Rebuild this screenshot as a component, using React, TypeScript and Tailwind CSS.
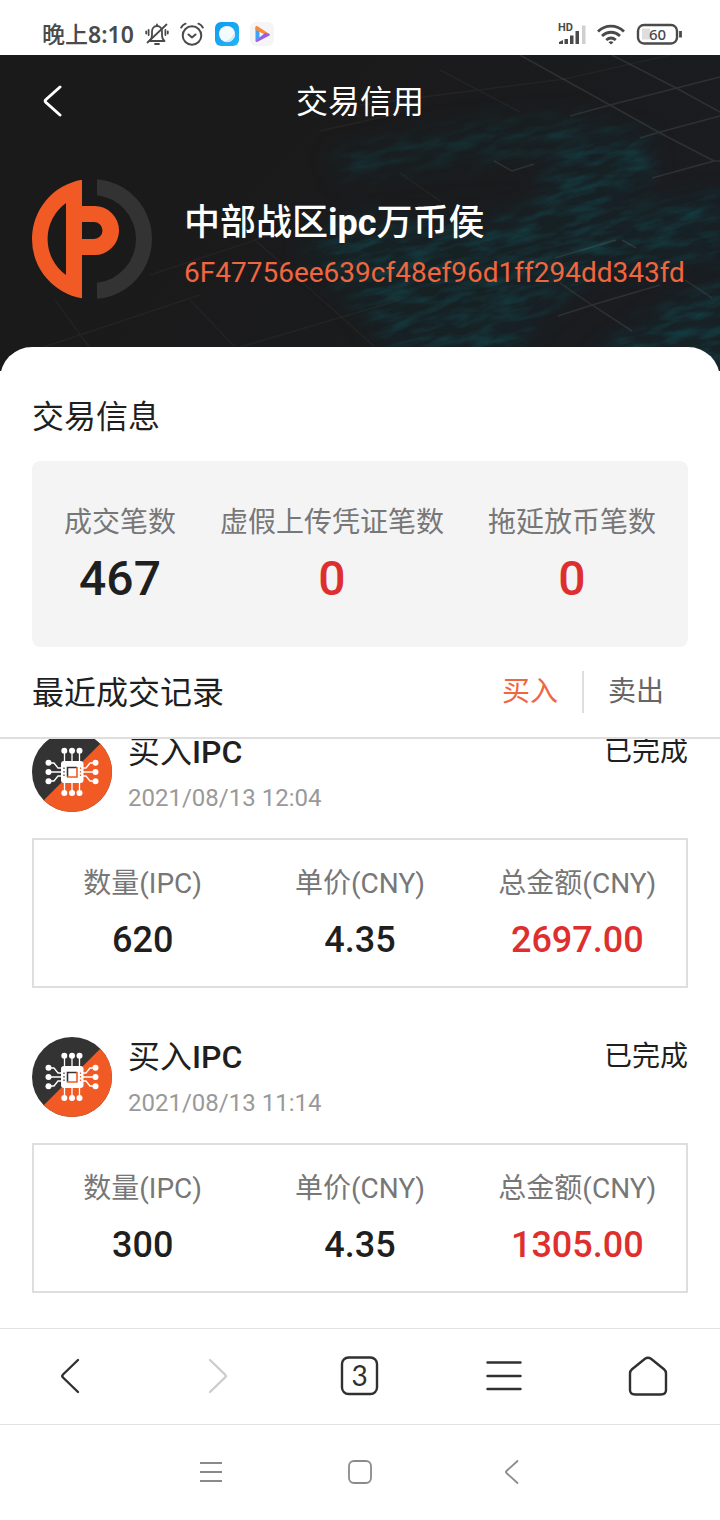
import { useState } from "react";
import clsx from "clsx";

const stats = [
  { label: "成交笔数", value: "467", danger: false },
  { label: "虚假上传凭证笔数", value: "0", danger: true },
  { label: "拖延放币笔数", value: "0", danger: true },
];

const records = [
  {
    id: 1,
    title: "买入IPC",
    time: "2021/08/13 12:04",
    status: "已完成",
    amount: "620",
    price: "4.35",
    total: "2697.00",
  },
  {
    id: 2,
    title: "买入IPC",
    time: "2021/08/13 11:14",
    status: "已完成",
    amount: "300",
    price: "4.35",
    total: "1305.00",
  },
];

function StatusBar() {
  return (
    <div className="flex h-[55px] items-center justify-between pt-3 pr-9 pl-[42px] text-[#4a4a4a]">
      <div className="flex items-center gap-[11px]">
        <span className="font-['Noto_Sans','Noto_Sans_CJK_SC',sans-serif] text-[23px] leading-8 font-medium">
          晚上<span className="font-semibold">8:10</span>
        </span>
        <svg className="h-6 w-6" viewBox="0 0 24 24" fill="none" stroke="currentColor" strokeWidth="1.8" strokeLinecap="round" strokeLinejoin="round">
          <path d="M5 19h14.500c-2-1.600-2.500-3-2.500-6V9.500C17 6.500 15 4 12 4S7 6.500 7 9.500V13c0 3-.5 4.400-2.500 6" />
          <path d="M10 22h4M12 2.500V4M21.500 2.500 2.500 20.500" />
          <path d="M3.600 8v5M1.200 9.500v2M20.400 8v5M22.800 9.500v2" />
        </svg>
        <svg className="h-6 w-6" viewBox="0 0 24 24" fill="none" stroke="currentColor" strokeWidth="2" strokeLinecap="round" strokeLinejoin="round">
          <circle cx="12" cy="13.500" r="9.300" />
          <path d="m8.500 12.500 3.500 3 3.500-3M1.200 5.500c1-1.800 2.400-3 4.300-3.800M22.800 5.500c-1-1.800-2.400-3-4.300-3.800" />
        </svg>
        <svg className="h-6 w-6" viewBox="0 0 24 24">
          <defs>
            <linearGradient id="appBlue" x1="0" y1="0" x2="1" y2="1">
              <stop offset="0" stopColor="#0f9bf0" />
              <stop offset="1" stopColor="#25b4f5" />
            </linearGradient>
          </defs>
          <rect width="24" height="24" rx="6" fill="url(#appBlue)" />
          <circle cx="12" cy="12" r="8" fill="#f4fbff" />
          <path d="M19.500 9a8 8 0 0 1-11 10.200C14 19 18.500 15 19.500 9Z" fill="#cfe9f8" />
        </svg>
        <svg className="h-6 w-6" viewBox="0 0 24 24">
          <rect width="24" height="24" rx="6" fill="#f5f5f5" />
          <path d="M5.500 5v14l4-3V9.500Z" fill="#3fa3f5" />
          <path d="M5.500 5c0-1 1-1.300 2-.8L19.500 12l-4.500.5L5.500 8Z" fill="#f58a3c" />
          <path d="M19.500 12c.6.6.3 1.300-.5 1.800L7.500 19.800c-1 .5-2 0-2-1L15 11Z" fill="#9a5be8" />
        </svg>
      </div>

      <div className="flex items-center gap-[11px]">
        <svg className="h-6 w-7" viewBox="0 0 28 24" fill="currentColor">
          <text x="0" y="9" fontSize="11" fontWeight="700" fontFamily="Roboto, sans-serif">
            HD
          </text>
          <path d="M1 22v-2l4-2v4ZM6.500 22v-5h3.500v5ZM12 22v-8.500h3.500V22ZM17.500 22V9H21v13Z" />
          <path d="M24 22V3.500h3.500V22Z" fill="#cfcfcf" />
        </svg>
        <svg className="h-6 w-7" viewBox="0 0 28 24" fill="none" stroke="currentColor" strokeWidth="2.800">
          <path d="M1 9.500c7.500-7.300 18.500-7.300 26 0M5 14c5.500-5 12.500-5 18 0M9.200 18c3-2.600 6.600-2.600 9.600 0" />
          <path d="m14 22.500-2.500-2.300c1.500-1.300 3.500-1.300 5 0Z" fill="currentColor" stroke="none" />
        </svg>
        <svg className="h-6 w-12" viewBox="0 0 48 24" fill="none">
          <rect x="6" y="6.500" width="8" height="11" fill="#dedede" />
          <rect x="2" y="3" width="39" height="18.500" rx="6" stroke="currentColor" strokeWidth="2.400" />
          <path d="M44.500 9v6.500" stroke="currentColor" strokeWidth="2.800" />
          <text x="21.500" y="17.500" textAnchor="middle" fontSize="15" fontWeight="500" fontFamily="Noto Sans, sans-serif" fill="currentColor">
            60
          </text>
        </svg>
      </div>
    </div>
  );
}

// faint grid with a teal world map fading in from the right
function HeaderBackdrop() {
  return (
    <svg className="absolute inset-0 h-full w-full" viewBox="0 0 720 316" preserveAspectRatio="xMaxYMid slice" aria-hidden="true">
      <defs>
        <filter id="soft" x="-20%" y="-20%" width="140%" height="140%">
          <feGaussianBlur stdDeviation="10" />
        </filter>
        <filter id="streaks" x="0" y="0" width="100%" height="100%" colorInterpolationFilters="sRGB">
          <feTurbulence type="fractalNoise" baseFrequency="0.03 0.12" numOctaves="5" seed="7" />
          <feColorMatrix values="0 0 0 0 0.07  0 0 0 0 0.27  0 0 0 0 0.29  2 0 0 0 -0.8" />
        </filter>
        <linearGradient id="tint" x1="0" y1="0" x2="1" y2="0.4">
          <stop offset="0.3" stopColor="#1a1a1a" />
          <stop offset="1" stopColor="#1a1c20" />
        </linearGradient>
        <mask id="land">
          <g filter="url(#soft)" fill="#fff">
            <path d="M330 100 460 68 590 58 615 80 555 102 440 112 340 125Z" opacity="0.6" />
            <path d="m550 110 60-40 40 10 5 45-40 30 105-18v70l-120 8-60 50-30 45h-110l-60-80-40-30 50-40 100 10 80-15Z" opacity="0.85" />
            <path d="m600 300 60-45 70-35v100H580Z" />
          </g>
        </mask>
      </defs>
      <rect width="720" height="316" fill="url(#tint)" />
      <g mask="url(#land)">
        <rect width="720" height="316" fill="#14262c" opacity="0.6" />
        <g transform="rotate(-14 540 160)">
          <rect x="200" y="-100" width="700" height="560" filter="url(#streaks)" />
        </g>
      </g>
      <g fill="none" stroke="#aaa" strokeWidth="1.500" opacity="0.14">
        <path d="m520 0 90 50 50 28 54 28M612 0l66 34 42 23M570 61l40-11 110-28M640 83l20-6 60-16M652 123l62-17h6" />
        <path d="m494 106 18 10 22-7M555 203l61-18M622 185l14 8M558 261l34-11 68-20M560 228l32 22 40 26M685 225l27 18" />
      </g>
      <g fill="none" stroke="#aaa" strokeWidth="1.500" opacity="0.06">
        <path d="M360 50 565 24 670 0M440 15l80 42M360 62l-20-12M400 58l-80 18" />
        <path d="m55 245 40 55M190 245l45 47M255 185l120 107M240 292l160-47M20 300l180-60M150 220l120-40M400 118l40 28" />
      </g>
    </svg>
  );
}

function PlatformLogo() {
  return (
    <svg className="size-[120px] shrink-0" viewBox="0 0 120 120">
      <path
        fill="#f15a24"
        fillRule="evenodd"
        d="M50 .8A60 60 0 0 0 0 60a60 60 0 0 0 50 59.200V76h12.500a24.500 24.500 0 0 0 0-49H50ZM34 24v72A44.400 44.400 0 0 1 15.600 60 44.400 44.400 0 0 1 34 24ZM50 43h12a8.500 8.500 0 0 1 0 17H50Z"
      />
      <path fill="#333" d="M65 .2A60 60 0 0 1 120 60a60 60 0 0 1-55 59.800v-16A44 44 0 0 0 104 60 44 44 0 0 0 65 16.200Z" />
    </svg>
  );
}

function CoinIcon() {
  return (
    <svg className="size-20 shrink-0" viewBox="0 0 80 80">
      <circle cx="40" cy="40" r="40" fill="#333" />
      <path d="M68.280 11.720A40 40 0 0 1 68.280 68.280 40 40 0 0 1 11.720 68.280Z" fill="#f15a24" />
      <g fill="none" stroke="#fff" strokeWidth="1.300">
        <path d="M32.500 19v42M40 19v42M47.500 19v42M17 40h46" />
        <path d="M17 31h5l4 5h6M17 49h5l4-5h6M63 31h-5l-4 5h-6M63 49h-5l-4-5h-6" />
      </g>
      <g fill="#fff">
        <circle cx="32.300" cy="18.700" r="3" />
        <circle cx="40" cy="18.700" r="3" />
        <circle cx="47.500" cy="18.700" r="3" />
        <circle cx="32.300" cy="61" r="3" />
        <circle cx="40" cy="61" r="3" />
        <circle cx="47.500" cy="61" r="3" />
        <circle cx="16.500" cy="30.700" r="3" />
        <circle cx="16.500" cy="40" r="3" />
        <circle cx="16.500" cy="49.300" r="3" />
        <circle cx="63.500" cy="30.700" r="3" />
        <circle cx="63.500" cy="40" r="3" />
        <circle cx="63.500" cy="49.300" r="3" />
        <rect x="29" y="29" width="22.500" height="22" rx="3" />
      </g>
      <path d="M35.500 45V35.500H45" fill="none" stroke="#333" strokeWidth="1.600" />
      <path d="M45 35v10H35" fill="none" stroke="#f15a24" strokeWidth="1.600" />
      <path d="M32 35.500v9" stroke="#333" strokeWidth="1.200" strokeDasharray="1.500 2" />
      <path d="M48.500 35.500v9" stroke="#f15a24" strokeWidth="1.200" strokeDasharray="1.500 2" />
    </svg>
  );
}

type TradeRecord = (typeof records)[number];

function RecordItem({ record }: { record: TradeRecord }) {
  const cells = [
    { label: "数量(IPC)", value: record.amount },
    { label: "单价(CNY)", value: record.price },
    { label: "总金额(CNY)", value: record.total, danger: true },
  ];

  return (
    <li>
      <div className="flex gap-4">
        <CoinIcon />
        <div className="flex-1">
          <h3 className="text-[32px] leading-10 font-medium">
            <span className="font-normal">{record.title.slice(0, 2)}</span>
            {record.title.slice(2)}
          </h3>
          <p className="mt-3 text-2xl leading-7 text-[#999]">{record.time}</p>
        </div>
        <span className="text-[28px] leading-10">{record.status}</span>
      </div>
      <dl className="mt-[26px] grid grid-cols-3 border-2 border-[#dedede] pt-6 pb-[22px] text-center">
        {cells.map((cell) => (
          <div key={cell.label}>
            <dt className="text-[28px] leading-10 text-[#777]">{cell.label}</dt>
            <dd
              className={clsx(
                "mt-3 text-4xl leading-[48px] font-medium",
                cell.danger && "text-[#de2f2f]"
              )}
            >
              {cell.value}
            </dd>
          </div>
        ))}
      </dl>
    </li>
  );
}

function BrowserBar() {
  const button = "flex items-center justify-center";
  return (
    <nav className="grid h-24 grid-cols-5 border-t border-[#e2e2e2] pb-0.5 text-[#303030]">
      <button className={button} aria-label="后退">
        <svg className="size-10" viewBox="0 0 40 40" fill="none" stroke="currentColor" strokeWidth="2.400" strokeLinecap="round" strokeLinejoin="round">
          <path d="M26 4 11 18.500q-1.500 1.500 0 3L26 36" />
        </svg>
      </button>
      <button className={clsx(button, "text-[#ccc]")} aria-label="前进" disabled>
        <svg className="size-10" viewBox="0 0 40 40" fill="none" stroke="currentColor" strokeWidth="2.400" strokeLinecap="round" strokeLinejoin="round">
          <path d="m14 4 15 14.500q1.500 1.500 0 3L14 36" />
        </svg>
      </button>
      <button className={button} aria-label="标签页">
        <svg className="size-10" viewBox="0 0 40 40" fill="none">
          <rect x="2" y="1.500" width="35" height="36.500" rx="6.500" stroke="currentColor" strokeWidth="2.400" />
          <text x="19.500" y="30" textAnchor="middle" fontSize="28" fontWeight="400" fontFamily="Lato, sans-serif" fill="currentColor">
            3
          </text>
        </svg>
      </button>
      <button className={button} aria-label="菜单">
        <svg className="size-10" viewBox="0 0 40 40" fill="none" stroke="currentColor" strokeWidth="2.400" strokeLinecap="round">
          <path d="M3.500 6.500h33M3.500 20h33M3.500 33h33" />
        </svg>
      </button>
      <button className={button} aria-label="主页">
        <svg className="size-10" viewBox="0 0 40 40" fill="none" stroke="currentColor" strokeWidth="2.400" strokeLinejoin="round">
          <path d="M17 2.800q3-2.200 6 0l13 10.400q2 1.600 2 4.300V34q0 4.500-5 4.500H7q-5 0-5-4.500V17.500q0-2.700 2-4.300Z" />
        </svg>
      </button>
    </nav>
  );
}

function SystemBar() {
  return (
    <div className="flex h-24 justify-center border-t border-[#e2e2e2] pb-0.5 text-[#8a8a8a]">
      <button className="flex w-[150px] items-center justify-center" aria-label="最近任务">
        <svg className="size-6" viewBox="0 0 24 24" fill="none" stroke="currentColor" strokeWidth="2">
          <path d="M2 3h22M2 12h22M2 21h22" />
        </svg>
      </button>
      <button className="flex w-[150px] items-center justify-center" aria-label="桌面">
        <svg className="size-6" viewBox="0 0 24 24" fill="none" stroke="currentColor" strokeWidth="1.800">
          <rect x="1" y="1" width="22" height="22" rx="5" />
        </svg>
      </button>
      <button className="flex w-[150px] items-center justify-center" aria-label="返回">
        <svg className="size-6" viewBox="0 0 24 24" fill="none" stroke="currentColor" strokeWidth="1.800" strokeLinecap="round" strokeLinejoin="round">
          <path d="M19.500 1 8.500 11q-1 1 0 2l11 10" />
        </svg>
      </button>
    </div>
  );
}

export default function App() {
  const [tab, setTab] = useState("buy");

  return (
    <div className="flex min-h-screen flex-col bg-white font-[Roboto,'Noto_Sans_CJK_SC',sans-serif] text-[#1f1f1f]">
      <StatusBar />

      <header className="relative overflow-hidden bg-[#1a1a1a] text-white">
        <HeaderBackdrop />
        <div className="relative px-8 pb-[72px]">
          <div className="grid h-[92px] grid-cols-[40px_1fr_40px] items-center">
            <button className="flex h-10 items-center justify-center" aria-label="返回">
              <svg className="size-8" viewBox="0 0 32 32" fill="none" stroke="currentColor" strokeWidth="3" strokeLinecap="round" strokeLinejoin="round">
                <path d="M24 2 10 14.500q-1.500 1.500 0 3L24 30" />
              </svg>
            </button>
            <h1 className="pt-0.5 text-center text-[32px] leading-[48px]">交易信用</h1>
          </div>
          <div className="flex gap-8 pt-8">
            <PlatformLogo />
            <div className="min-w-0 pt-5">
              <h2 className="text-4xl leading-[48px] font-medium">
                中部战区<b>ipc</b>万币侯
              </h2>
              <p className="mt-[6px] text-[28px] leading-10 text-[#f0663f]">
                6F47756ee639cf48ef96d1ff294dd343fd
              </p>
            </div>
          </div>
        </div>
      </header>

      <main className="relative -mt-6 flex flex-1 flex-col rounded-t-[32px] bg-white">
        <section className="px-8 pt-[46px]">
          <h2 className="text-[32px] leading-[48px]">交易信息</h2>
          <dl className="mt-5 flex h-[186px] justify-between rounded-lg bg-[#f4f4f4] px-8 pt-[42px] text-center">
            {stats.map((item) => (
              <div key={item.label}>
                <dt className="text-[28px] leading-10 text-[#777]">{item.label}</dt>
                <dd
                  className={clsx(
                    "mt-2 text-5xl leading-[56px] font-medium",
                    item.danger && "text-[#de2f2f]"
                  )}
                >
                  {item.value}
                </dd>
              </div>
            ))}
          </dl>
        </section>

        <div className="flex h-[92px] items-center justify-between border-b-2 border-[#dedede] px-8">
          <h2 className="pt-0.5 text-[32px] leading-[48px]">最近成交记录</h2>
          <div className="flex text-[28px] leading-[42px]" role="tablist">
            <button
              role="tab"
              aria-selected={tab === "buy"}
              onClick={() => setTab("buy")}
              className={clsx("px-6", tab === "buy" ? "text-[#f0663f]" : "text-[#666]")}
            >
              买入
            </button>
            <button
              role="tab"
              aria-selected={tab === "sell"}
              onClick={() => setTab("sell")}
              className={clsx(
                "border-l-2 border-[#dedede] px-6",
                tab === "sell" ? "text-[#f0663f]" : "text-[#666]"
              )}
            >
              卖出
            </button>
          </div>
        </div>

        <div className="flex-1 overflow-hidden px-8">
          <ul className="-mt-[7px] flex flex-col gap-[49px]">
            {records.map((record) => (
              <RecordItem key={record.id} record={record} />
            ))}
          </ul>
        </div>
      </main>

      <footer className="bg-white">
        <BrowserBar />
        <SystemBar />
      </footer>
    </div>
  );
}
